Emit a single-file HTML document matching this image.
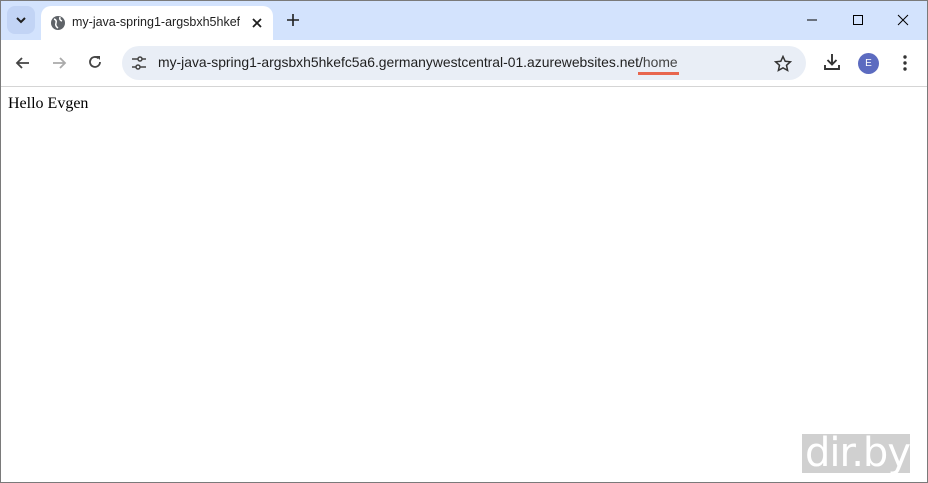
<!DOCTYPE html><html><head><style>
*{margin:0;padding:0;box-sizing:border-box}
body{width:928px;height:483px;position:relative;overflow:hidden;background:#fff;font-family:"Liberation Sans",sans-serif}
.frame{position:absolute;inset:0;border:1px solid #7a7a7a;pointer-events:none;z-index:9}
.strip{position:absolute;left:0;top:0;width:928px;height:40px;background:#d3e3fd}
.tabbtn{position:absolute;left:7px;top:6px;width:28px;height:28px;border-radius:8px;background:#c2d4f5}
.tab{position:absolute;left:41px;top:6px;width:232px;height:34px;background:#fff;border-radius:10px 10px 0 0}
.tt{position:absolute;left:31px;top:9px;font-size:12.5px;color:#1f1f1f;white-space:nowrap;width:168px;overflow:hidden}
.tool{position:absolute;left:0;top:40px;width:928px;height:47px;background:#fff;border-bottom:1px solid #d5d5d5}
.omni{position:absolute;left:122px;top:6px;width:684px;height:34px;border-radius:17px;background:#e9eef6}
.url{position:absolute;left:36px;top:8px;font-size:13.9px;color:#1f1f1f;white-space:nowrap}
.ul{position:absolute;left:516px;top:26px;width:41px;height:3px;background:#e8664e}
svg{position:absolute}
.hello{position:absolute;left:8px;top:95px;font-family:"Liberation Serif",serif;font-size:16px;color:#000}
.wm{position:absolute;left:802px;top:434px;width:108px;height:39px;background:#d0d0d0;color:#fff;font-size:40px;line-height:39px;text-align:right;overflow:hidden;font-family:"DejaVu Sans","Liberation Sans",sans-serif;letter-spacing:-1px}
</style></head><body>
<div class="strip"></div>
<div class="tabbtn"></div>
<svg style="left:15px;top:14px" width="12" height="12"><path d="M2 4l4 4 4-4" fill="none" stroke="#1f1f1f" stroke-width="2"/></svg>
<div class="tab"><svg style="left:9px;top:9px" width="16" height="16"><circle cx="8" cy="8" r="7" fill="#5f6368"/><path d="M4 4q3 1 2 4t2 5M10 2q-1 3 2 4" stroke="#fff" stroke-width="1.5" fill="none"/></svg><div class="tt">my-java-spring1-argsbxh5hkefc5a6</div>
<svg style="left:210px;top:11px" width="12" height="12"><path d="M2 2l8 8M10 2l-8 8" stroke="#1f1f1f" stroke-width="1.8"/></svg></div>
<svg style="left:286px;top:13px" width="14" height="14"><path d="M7 1v12M1 7h12" stroke="#1f1f1f" stroke-width="1.6"/></svg>
<svg style="left:806px;top:14px" width="12" height="12"><path d="M1 6h10" stroke="#000"/></svg>
<svg style="left:852px;top:14px" width="12" height="12"><rect x="1.5" y="1.5" width="9" height="9" fill="none" stroke="#000"/></svg>
<svg style="left:897px;top:14px" width="12" height="12"><path d="M1 1l10 10M11 1l-10 10" stroke="#000"/></svg>
<div class="tool">
<svg style="left:14px;top:15px" width="18" height="16"><path d="M15 8H3M8 3L3 8l5 5" fill="none" stroke="#444" stroke-width="1.8"/></svg>
<svg style="left:50px;top:15px" width="18" height="16"><path d="M3 8h12M10 3l5 5-5 5" fill="none" stroke="#aaa" stroke-width="1.8"/></svg>
<svg style="left:87px;top:14px" width="16" height="16"><path d="M13 8a5 5 0 1 1-1.5-3.6" fill="none" stroke="#444" stroke-width="1.8"/><path d="M9 2h4v4z" fill="#444"/></svg>
<div class="omni">
<svg style="left:9px;top:10px" width="16" height="14"><path d="M1 3h6M11 3h4M1 11h4M9 11h6" stroke="#444" stroke-width="1.6"/><circle cx="9" cy="3" r="2" fill="none" stroke="#444" stroke-width="1.5"/><circle cx="7" cy="11" r="2" fill="none" stroke="#444" stroke-width="1.5"/></svg>
<div class="url">my-java-spring1-argsbxh5hkefc5a6.germanywestcentral-01.azurewebsites.net/<span style="color:#444">home</span></div>
<div class="ul"></div>
<svg style="left:652px;top:9px" width="18" height="17"><path d="M9 1.5l2.2 4.8 5.2.5-3.9 3.5 1.1 5.1L9 12.8 4.4 15.4l1.1-5.1L1.6 6.8l5.2-.5z" fill="none" stroke="#333" stroke-width="1.5"/></svg>
</div>
<svg style="left:823px;top:13px" width="18" height="18"><path d="M9 1v10M4.5 7L9 11.5 13.5 7M2 12v4h14v-4" fill="none" stroke="#333" stroke-width="1.9"/></svg>
<div style="position:absolute;left:858px;top:13px;width:21px;height:21px;border-radius:50%;background:#5c6bc0;color:#fff;font-size:10px;text-align:center;line-height:21px">E</div>
<svg style="left:902px;top:14px" width="6" height="18"><circle cx="3" cy="3" r="1.7" fill="#333"/><circle cx="3" cy="9" r="1.7" fill="#333"/><circle cx="3" cy="15" r="1.7" fill="#333"/></svg>
</div>
<div class="hello">Hello Evgen</div>
<div class="wm">dir.by</div>
<div class="frame"></div>
</body></html>
